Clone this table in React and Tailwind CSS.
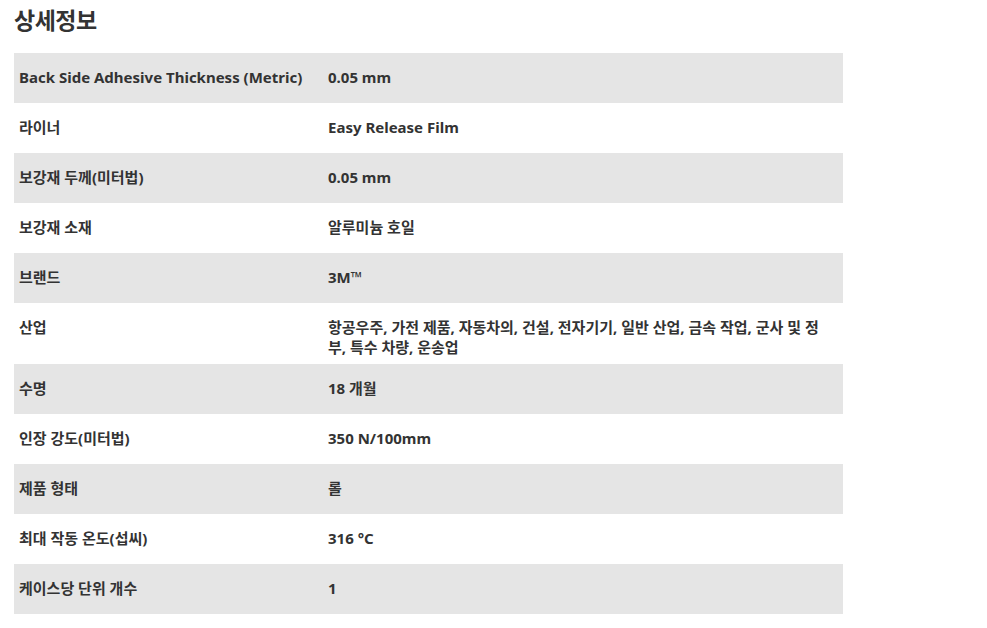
const rows = [
  ['Back Side Adhesive Thickness (Metric)', '0.05 mm'],
  ['라이너', 'Easy Release Film'],
  ['보강재 두께(미터법)', '0.05 mm'],
  ['보강재 소재', '알루미늄 호일'],
  ['브랜드', '3M™'],
  ['산업', '항공우주, 가전 제품, 자동차의, 건설, 전자기기, 일반 산업, 금속 작업, 군사 및 정부, 특수 차량, 운송업'],
  ['수명', '18 개월'],
  ['인장 강도(미터법)', '350 N/100mm'],
  ['제품 형태', '롤'],
  ['최대 작동 온도(섭씨)', '316 °C'],
  ['케이스당 단위 개수', '1'],
]

export default function App() {
  return (
    <div
      className="w-[987px] h-[628px] bg-white text-[#333] px-[14px] pt-[5px]"
      style={{ fontFamily: '"Noto Sans", "Noto Sans CJK KR", sans-serif' }}
    >
      <h2 className="text-[23px] font-bold leading-[30px] tracking-[-0.5px]">상세정보</h2>

      <div className="w-[829px] mt-[18px]">
        {rows.map(([label, value], i) => (
          <div
            key={label}
            className={`flex items-start min-h-[50px] pt-[14px] pb-[7px] text-[15px] font-bold leading-[20px] ${
              i % 2 === 0 ? 'bg-[#e5e5e5]' : 'bg-white'
            }`}
          >
            <div className="w-[309px] px-[5px] shrink-0">{label}</div>
            <div className="flex-1 pl-[5px] pr-[16px]">{value}</div>
          </div>
        ))}
      </div>
    </div>
  )
}
